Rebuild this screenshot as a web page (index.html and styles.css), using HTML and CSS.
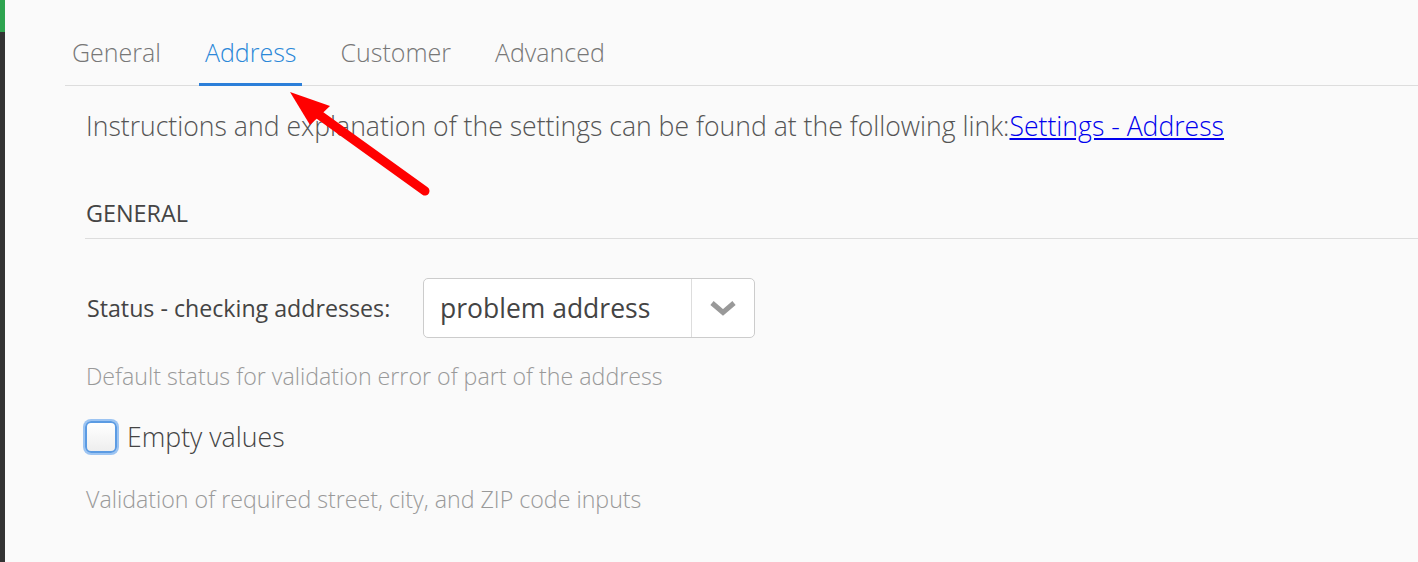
FILE: index.html
```html
<!DOCTYPE html>
<html lang="en">
<head>
  <meta charset="UTF-8">
  <title>Settings - Address</title>
  <link rel="stylesheet" href="styles.css">
</head>
<body>
  <div class="app">
    <!-- left rail -->
    <aside class="rail"><div class="rail-top"></div></aside>

    <main class="panel">
      <!-- tabs -->
      <nav class="tabs">
        <a class="tab">General</a>
        <a class="tab active">Address</a>
        <a class="tab">Customer</a>
        <a class="tab">Advanced</a>
      </nav>

      <div class="tab-body">
        <p class="intro">Instructions and explanation of the settings can be found at the following link:<a class="doc-link" href="#">Settings - Address</a></p>

        <h3 class="section-title">GENERAL</h3>

        <div class="field-row">
          <label class="field-label">Status - checking addresses:</label>
          <div class="select">
            <span class="select-value">problem address</span>
            <span class="select-caret">
              <svg viewBox="0 0 26 16" width="26" height="16">
                <path d="M2 3 L13 12.5 L24 3" fill="none" stroke="#999" stroke-width="5" stroke-linejoin="miter" />
              </svg>
            </span>
          </div>
        </div>
        <p class="hint">Default status for validation error of part of the address</p>

        <label class="check">
          <span class="check-box"></span>
          <span class="check-text">Empty values</span>
        </label>
        <p class="hint hint-last">Validation of required street, city, and ZIP code inputs</p>
      </div>
    </main>

    <!-- annotation arrow -->
    <svg class="annotation" viewBox="0 0 1418 562" width="1418" height="562">
      <line x1="318" y1="114" x2="425" y2="191" stroke="#ff0000" stroke-width="9" stroke-linecap="round" />
      <polygon points="290,92 330,106 310,125" fill="#ff0000" />
    </svg>
  </div>
</body>
</html>
```

FILE: styles.css
```css
/* base */
html, body { margin: 0; padding: 0; background: #fafafa; }
body { font-family: "Open Sans", "Liberation Sans", sans-serif; color: #444; }

.app { position: relative; display: flex; min-height: 562px; overflow: hidden; }

/* left rail */
.rail { width: 5px; background: #333; flex-shrink: 0; }
.rail-top { height: 32px; background: #2ea44f; }

.panel { flex: 1; padding-left: 60px; }

/* tabs */
.tabs { display: flex; gap: 32px; height: 85px; border-bottom: 1px solid #ddd; padding-left: 1px; }
.tab { align-self: flex-end; margin-bottom: -1px; padding: 0 6px 13px; border-bottom: 3px solid transparent;
  font-size: 25px; font-weight: 300; line-height: 36px; color: #777; cursor: pointer; }
.tab.active { color: #2b88d8; border-bottom-color: #2b7fd9; }

/* body */
.tab-body { padding-left: 20px; }
.intro { margin: 22px 0 0 1px; font-size: 26.6px; font-weight: 300; color: #555; }
.doc-link { color: #0000ee; text-decoration: underline; }

.section-title { margin: 54px 0 0; padding: 0 0 10px 1px; border-bottom: 1px solid #ddd;
  font-size: 23.4px; font-weight: 400; color: #444; line-height: 30px; }

.field-row { display: flex; align-items: center; margin-top: 39px; }
.field-label { width: 336px; padding-left: 2px; font-size: 23.2px; font-weight: 400; color: #444; }

.select { display: flex; width: 330px; height: 58px; border: 1px solid #ccc; border-radius: 5px; background: #fff; }
.select-value { flex: 1; padding-left: 16px; line-height: 58px; font-size: 26.5px; color: #444; }
.select-caret { width: 62px; border-left: 1px solid #ddd; display: flex; align-items: center; justify-content: center; }

.hint { margin: 22px 0 0 1px; font-size: 23.2px; font-weight: 300; color: #999; }

.check { display: flex; align-items: center; gap: 10px; margin-top: 26px; }
.check-box { width: 32px; height: 32px; box-sizing: border-box; border: 2px solid #5b9be3; border-radius: 6px;
  background: linear-gradient(#fff, #eee); box-shadow: 0 0 0 2px #9cc4f2; }
.check-text { font-size: 26.7px; font-weight: 300; color: #444; }
.hint-last { margin-top: 28px; }

/* annotation overlay */
.annotation { position: absolute; left: 0; top: 0; pointer-events: none; }
```
